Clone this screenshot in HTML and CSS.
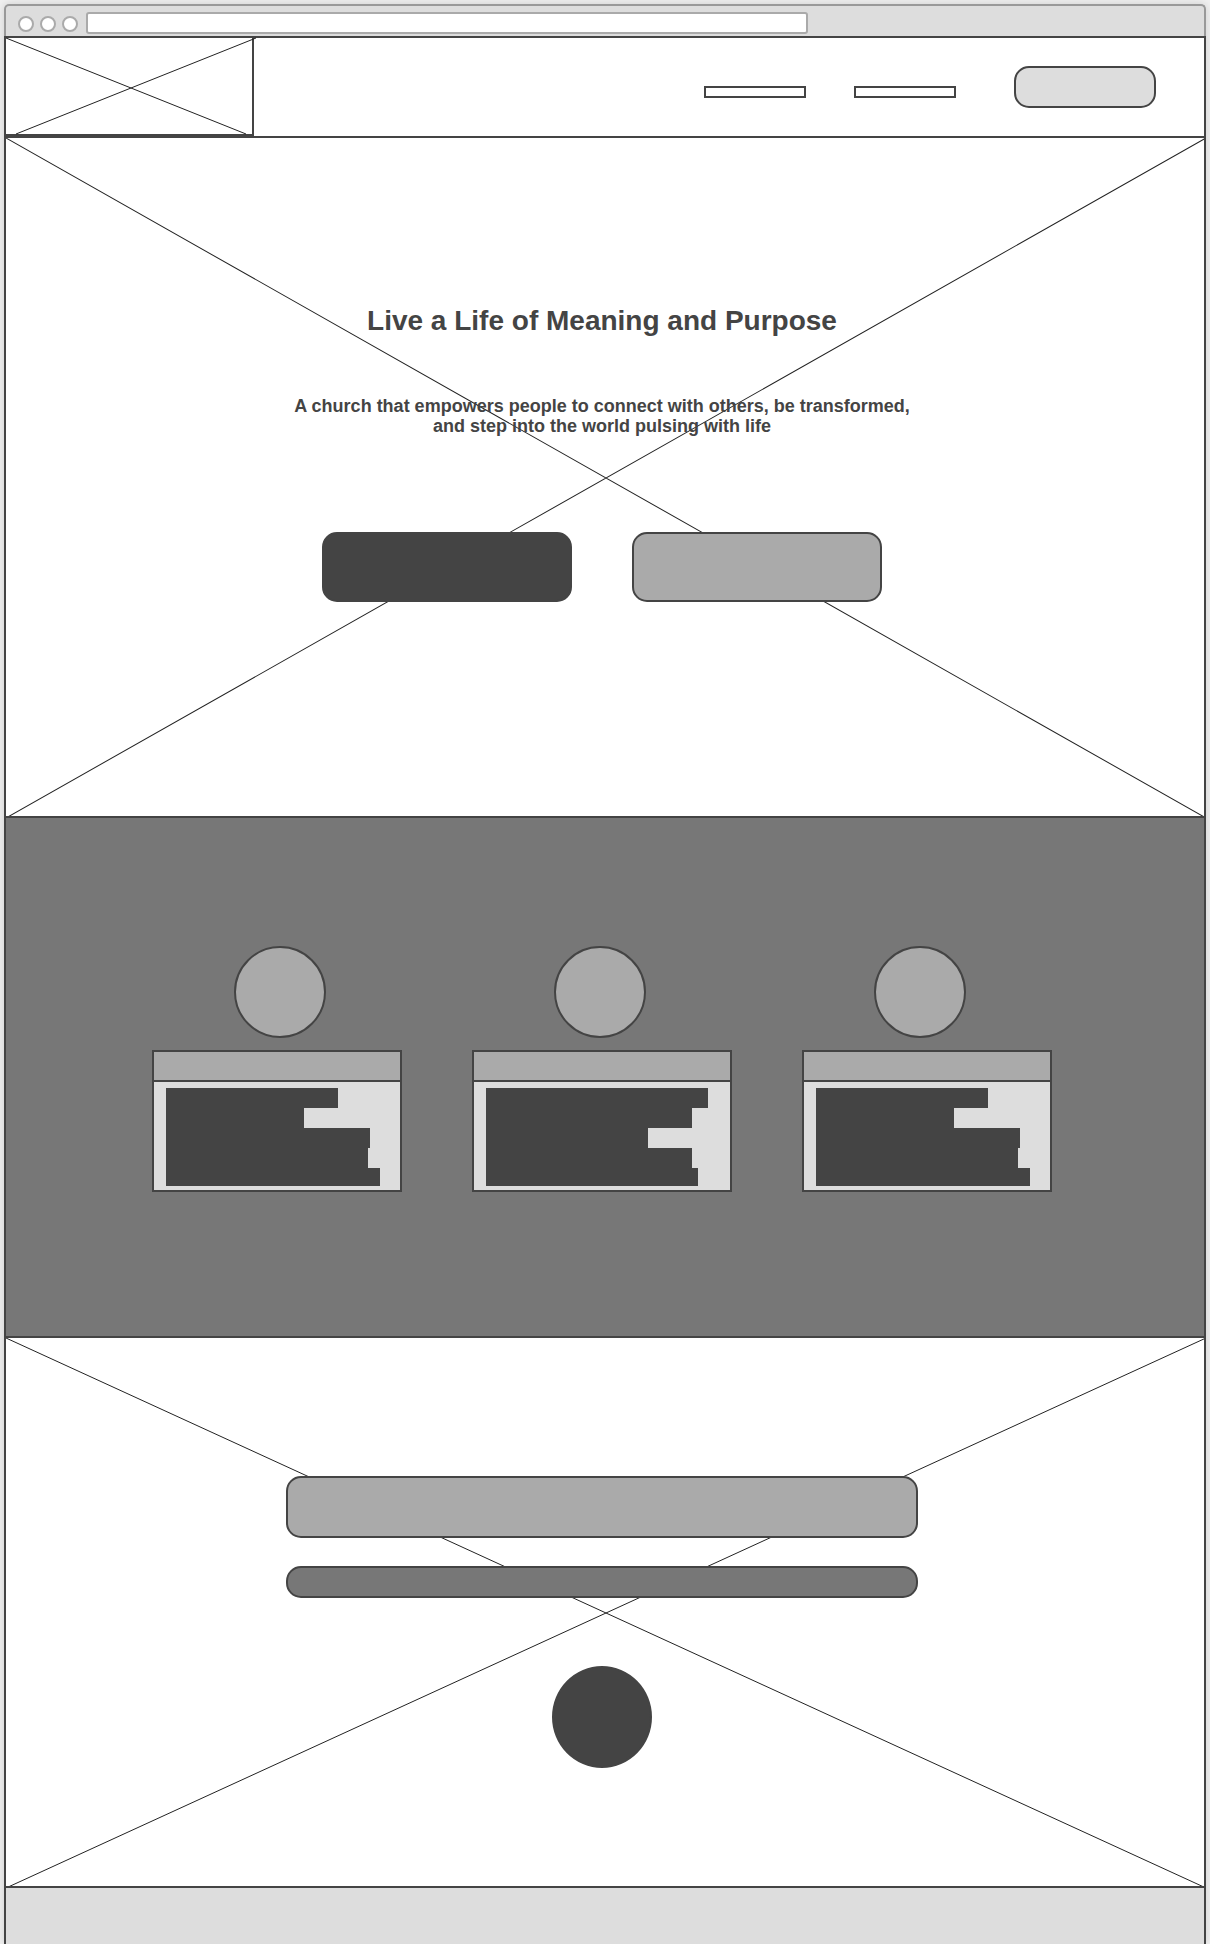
FILE: index.html
```html
<!DOCTYPE html>
<html lang="en">
<head>
<meta charset="utf-8">
<meta name="viewport" content="width=device-width, initial-scale=1">
<title>Live a Life of Meaning and Purpose</title>
<link rel="stylesheet" href="styles.css">
</head>
<body>
<div class="window">
  <div class="chrome">
    <span class="dot"></span>
    <span class="dot"></span>
    <span class="dot"></span>
    <input class="address" type="text" aria-label="Address">
  </div>

  <div class="site">
    <header class="header">
      <a class="logo" href="#" aria-label="Home">
        <svg class="logo-cross" viewBox="0 0 248 96" aria-hidden="true">
          <path d="M0 0L240 96M250 0L10 96"/>
        </svg>
      </a>
      <nav class="nav" aria-label="Main">
        <div class="nav-links">
          <a class="nav-link" href="#" aria-label="First page"></a>
          <a class="nav-link" href="#" aria-label="Second page"></a>
        </div>
        <button class="box box-light nav-button" type="button" aria-label="Menu action"></button>
      </nav>
    </header>

    <main>
      <section class="banner hero">
        <svg class="cross" viewBox="0 0 100 100" preserveAspectRatio="none" aria-hidden="true">
          <path d="M0 0L100 100M100 0L0 100"/>
        </svg>
        <h1 class="title">Live a Life of Meaning and Purpose</h1>
        <p class="subtitle">A church that empowers people to connect with others, be transformed, and step into the world pulsing with life</p>
        <div class="actions">
          <button class="box box-dark action" type="button" aria-label="Primary action"></button>
          <button class="box box-mid action" type="button" aria-label="Secondary action"></button>
        </div>
      </section>

      <section class="features">
        <div class="features-inner">
          <div class="icons">
            <span class="icon"></span>
            <span class="icon"></span>
            <span class="icon"></span>
          </div>
          <div class="cards">
            <article class="card">
              <div class="card-head"></div>
              <div class="card-body">
                <span class="bar" style="width:172px"></span>
                <span class="bar" style="width:138px"></span>
                <span class="bar" style="width:204px"></span>
                <span class="bar" style="width:202px"></span>
                <span class="bar" style="width:214px"></span>
              </div>
            </article>
            <article class="card card-wide">
              <div class="card-head"></div>
              <div class="card-body">
                <span class="bar" style="width:222px"></span>
                <span class="bar" style="width:206px"></span>
                <span class="bar" style="width:162px"></span>
                <span class="bar" style="width:206px"></span>
                <span class="bar" style="width:212px"></span>
              </div>
            </article>
            <article class="card">
              <div class="card-head"></div>
              <div class="card-body">
                <span class="bar" style="width:172px"></span>
                <span class="bar" style="width:138px"></span>
                <span class="bar" style="width:204px"></span>
                <span class="bar" style="width:202px"></span>
                <span class="bar" style="width:214px"></span>
              </div>
            </article>
          </div>
        </div>
      </section>

      <section class="banner story">
        <svg class="cross" viewBox="0 0 100 100" preserveAspectRatio="none" aria-hidden="true">
          <path d="M0 0L100 100M100 0L0 100"/>
        </svg>
        <div class="box box-mid story-title"></div>
        <div class="box box-deep story-text"></div>
        <button class="box box-dark play" type="button" aria-label="Play"></button>
      </section>
    </main>

    <footer class="footer"></footer>
  </div>
</div>
</body>
</html>
```
FILE: styles.css
```css
:root {
  --ink: #444;
  --line: #222;
  --deep: #777;
  --mid: #aaa;
  --light: #ddd;
}

* {
  box-sizing: border-box;
}

body {
  margin: 0;
  padding: 4px 4px 0;
  background: #f0f0f0;
  color: var(--ink);
  font-family: "Liberation Sans", Arial, Helvetica, sans-serif;
}

.window {
  display: flex;
  flex-direction: column;
  min-height: calc(100vh - 4px);
  border-radius: 5px 5px 0 0;
  box-shadow: 0 0 8px rgba(0, 0, 0, 0.15);
}

/* Browser bar */
.chrome {
  display: flex;
  align-items: center;
  gap: 6px;
  height: 32px;
  padding: 6px 12px 0;
  border: 2px solid #999;
  border-bottom: 0;
  border-radius: 5px 5px 0 0;
  background: var(--light);
}

.dot {
  width: 16px;
  height: 16px;
  border: 2px solid var(--mid);
  border-radius: 50%;
  background: #fff;
}

.address {
  width: 722px;
  height: 22px;
  margin: 0 0 2px 2px;
  padding: 0 6px;
  border: 2px solid var(--mid);
  border-radius: 3px;
  background: #fff;
}

.site {
  display: flex;
  flex: 1;
  flex-direction: column;
  border: 2px solid var(--ink);
  border-bottom: 0;
  background: #fff;
}

/* Shared placeholder box */
.box {
  display: block;
  padding: 0;
  border: 2px solid var(--ink);
  border-radius: 15px;
}

.box-light { background: var(--light); }
.box-mid { background: var(--mid); }
.box-deep { background: var(--deep); }
.box-dark { background: var(--ink); }

/* Header */
.header {
  display: flex;
  justify-content: space-between;
  border-bottom: 2px solid var(--ink);
}

.logo {
  width: 248px;
  height: 98px;
  border: solid var(--ink);
  border-width: 0 2px 2px 0;
}

.logo-cross {
  display: block;
  width: 248px;
  height: 96px;
  overflow: visible;
  fill: none;
  stroke: var(--line);
}

.nav {
  display: flex;
  align-items: center;
  gap: 58px;
  padding-right: 48px;
}

.nav-links {
  display: flex;
  gap: 48px;
  padding-top: 10px;
}

.nav-link {
  width: 102px;
  height: 12px;
  border: 2px solid var(--ink);
}

.nav-button {
  width: 142px;
  height: 42px;
}

/* Image banners with crossed diagonals */
.banner {
  position: relative;
  display: flex;
  flex-direction: column;
  align-items: center;
  overflow: hidden;
  border-bottom: 2px solid var(--ink);
}

.banner > * {
  position: relative;
}

.banner > .cross {
  position: absolute;
  top: 0;
  left: 0;
  width: calc(100% + 2px);
  height: calc(100% + 2px);
  fill: none;
  stroke: var(--line);
}

.cross path {
  vector-effect: non-scaling-stroke;
}

.hero {
  padding: 167px 6px 214px 0;
}

.title {
  margin: 0 0 59px;
  font-size: 28px;
  line-height: 32px;
}

.subtitle {
  max-width: 640px;
  margin: 0 0 96px;
  font-size: 18px;
  font-weight: bold;
  line-height: 20px;
  text-align: center;
}

.actions {
  display: flex;
  gap: 60px;
}

.action {
  width: 250px;
  height: 70px;
}

/* Features */
.features {
  display: flex;
  justify-content: center;
  padding: 128px 6px 144px 0;
  border-bottom: 2px solid var(--ink);
  background: var(--deep);
}

.icons {
  display: flex;
  gap: 228px;
  margin-bottom: 12px;
  padding-left: 82px;
}

.icon {
  width: 92px;
  height: 92px;
  border: 2px solid var(--ink);
  border-radius: 50%;
  background: var(--mid);
}

.cards {
  display: flex;
  gap: 70px;
}

.card {
  width: 250px;
  border: 2px solid var(--ink);
  background: var(--light);
}

.card-wide {
  width: 260px;
}

.card-head {
  height: 30px;
  border-bottom: 2px solid var(--ink);
  background: var(--mid);
}

.card-body {
  padding: 6px 12px 4px;
}

.bar {
  display: block;
  height: 20px;
  background: var(--ink);
}

.bar:last-child {
  height: 18px;
}

/* Story */
.story {
  padding: 138px 6px 118px 0;
}

.story-title,
.story-text {
  width: 632px;
  max-width: 100%;
}

.story-title {
  height: 62px;
  margin-bottom: 28px;
}

.story-text {
  height: 32px;
  margin-bottom: 68px;
}

.play {
  width: 100px;
  height: 102px;
  border-radius: 50%;
}

.footer {
  flex: 1;
  min-height: 56px;
  background: var(--light);
}
```
